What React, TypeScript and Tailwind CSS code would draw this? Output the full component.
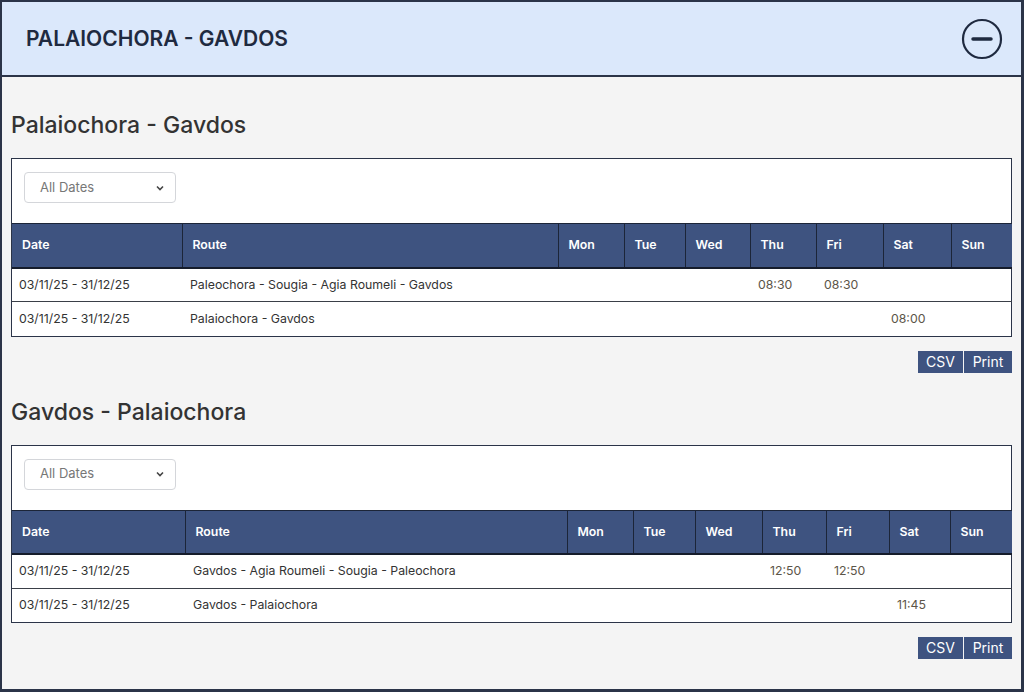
interface Row {
  date: string;
  route: string;
  times: string[];
}

interface Section {
  title: string;
  widths: number[];
  rows: Row[];
}

const days = ["Mon", "Tue", "Wed", "Thu", "Fri", "Sat", "Sun"];

const sections: Section[] = [
  {
    title: "Palaiochora - Gavdos",
    widths: [170, 376, 66, 61, 65, 66, 67, 68, 61],
    rows: [
      { date: "03/11/25 - 31/12/25", route: "Paleochora - Sougia - Agia Roumeli - Gavdos", times: ["", "", "", "08:30", "08:30", "", ""] },
      { date: "03/11/25 - 31/12/25", route: "Palaiochora - Gavdos", times: ["", "", "", "", "", "08:00", ""] },
    ],
  },
  {
    title: "Gavdos - Palaiochora",
    widths: [173, 382, 66, 62, 67, 64, 63, 61, 62],
    rows: [
      { date: "03/11/25 - 31/12/25", route: "Gavdos - Agia Roumeli - Sougia - Paleochora", times: ["", "", "", "12:50", "12:50", "", ""] },
      { date: "03/11/25 - 31/12/25", route: "Gavdos - Palaiochora", times: ["", "", "", "", "", "11:45", ""] },
    ],
  },
];

const Timetable = ({ title, widths, rows }: Section) => {
  return (
    <div className="mb-[23px]">
      <h2 className="text-[23px] leading-[32px] text-[#333] font-medium mb-[17px]">{title}</h2>
      <div className="bg-white border border-[#2b3448]">
        <div className="h-[64px] flex items-start pt-[13px] pl-[12px]">
          <div className="w-[152px] h-[31px] border border-[#d4d6da] rounded-[4px] flex items-center justify-between pl-[15px] pr-[10px] text-[13px] text-[#777]">
            <span>All Dates</span>
            <svg width="10" height="10" viewBox="0 0 10 10">
              <path d="M2 3.5 L5 6.5 L8 3.5" stroke="#444" strokeWidth="1.6" fill="none" />
            </svg>
          </div>
        </div>
        <table className="w-full border-collapse table-fixed text-[12.3px]">
          <colgroup>
            {widths.map((w, i) => (
              <col key={i} style={{ width: w }} />
            ))}
          </colgroup>
          <thead>
            <tr className="bg-[#3e5380] text-white h-[44px] border-t border-[#1c2538] border-b-2 border-b-[#151c2b]">
              {["Date", "Route", ...days].map((h, i) => (
                <th
                  key={h}
                  className={`text-left font-semibold pl-[10px] pr-[4px] ${i > 0 ? "border-l border-[#1c2538]" : ""}`}
                >
                  {h}
                </th>
              ))}
            </tr>
          </thead>
          <tbody>
            {rows.map((r, ri) => (
              <tr key={ri} className={`h-[34px] ${ri > 0 ? "border-t border-[#3a3f48]" : ""}`}>
                <td className="px-[7px] text-[#333]">{r.date}</td>
                <td className="px-[8px] text-[#333]">{r.route}</td>
                {r.times.map((t, ti) => (
                  <td key={ti} className="pl-[8px] text-[#5c5548]">
                    {t}
                  </td>
                ))}
              </tr>
            ))}
          </tbody>
        </table>
      </div>
      <div className="flex justify-end gap-px mt-[14px]">
        <button className="bg-[#3e5380] text-white text-[14px] h-[22px] w-[45px] leading-[22px]">CSV</button>
        <button className="bg-[#3e5380] text-white text-[14px] h-[22px] w-[48px] leading-[22px]">Print</button>
      </div>
    </div>
  );
};

export default function App() {
  return (
    <div
      className="w-[1024px] h-[692px] border-2 border-[#2b3448] border-r-[3px] border-b-[3px] bg-[#f4f4f4] overflow-hidden"
      style={{ fontFamily: "Inter, 'Noto Sans', sans-serif" }}
    >
      <div className="h-[75px] bg-[#dbe8fb] border-b-2 border-[#2b3448] flex items-center justify-between pl-[24px] pr-[18px]">
        <h1 className="text-[21px] font-semibold text-[#1f2a40]">PALAIOCHORA - GAVDOS</h1>
        <svg width="42" height="42" viewBox="0 0 42 42">
          <circle cx="21" cy="21" r="19" stroke="#1f2a40" strokeWidth="2.2" fill="none" />
          <line x1="12" y1="21" x2="30" y2="21" stroke="#1f2a40" strokeWidth="3.5" strokeLinecap="round" />
        </svg>
      </div>
      <div className="px-[9px] pt-[32px]">
        {sections.map((s) => (
          <Timetable key={s.title} {...s} />
        ))}
      </div>
    </div>
  );
}
